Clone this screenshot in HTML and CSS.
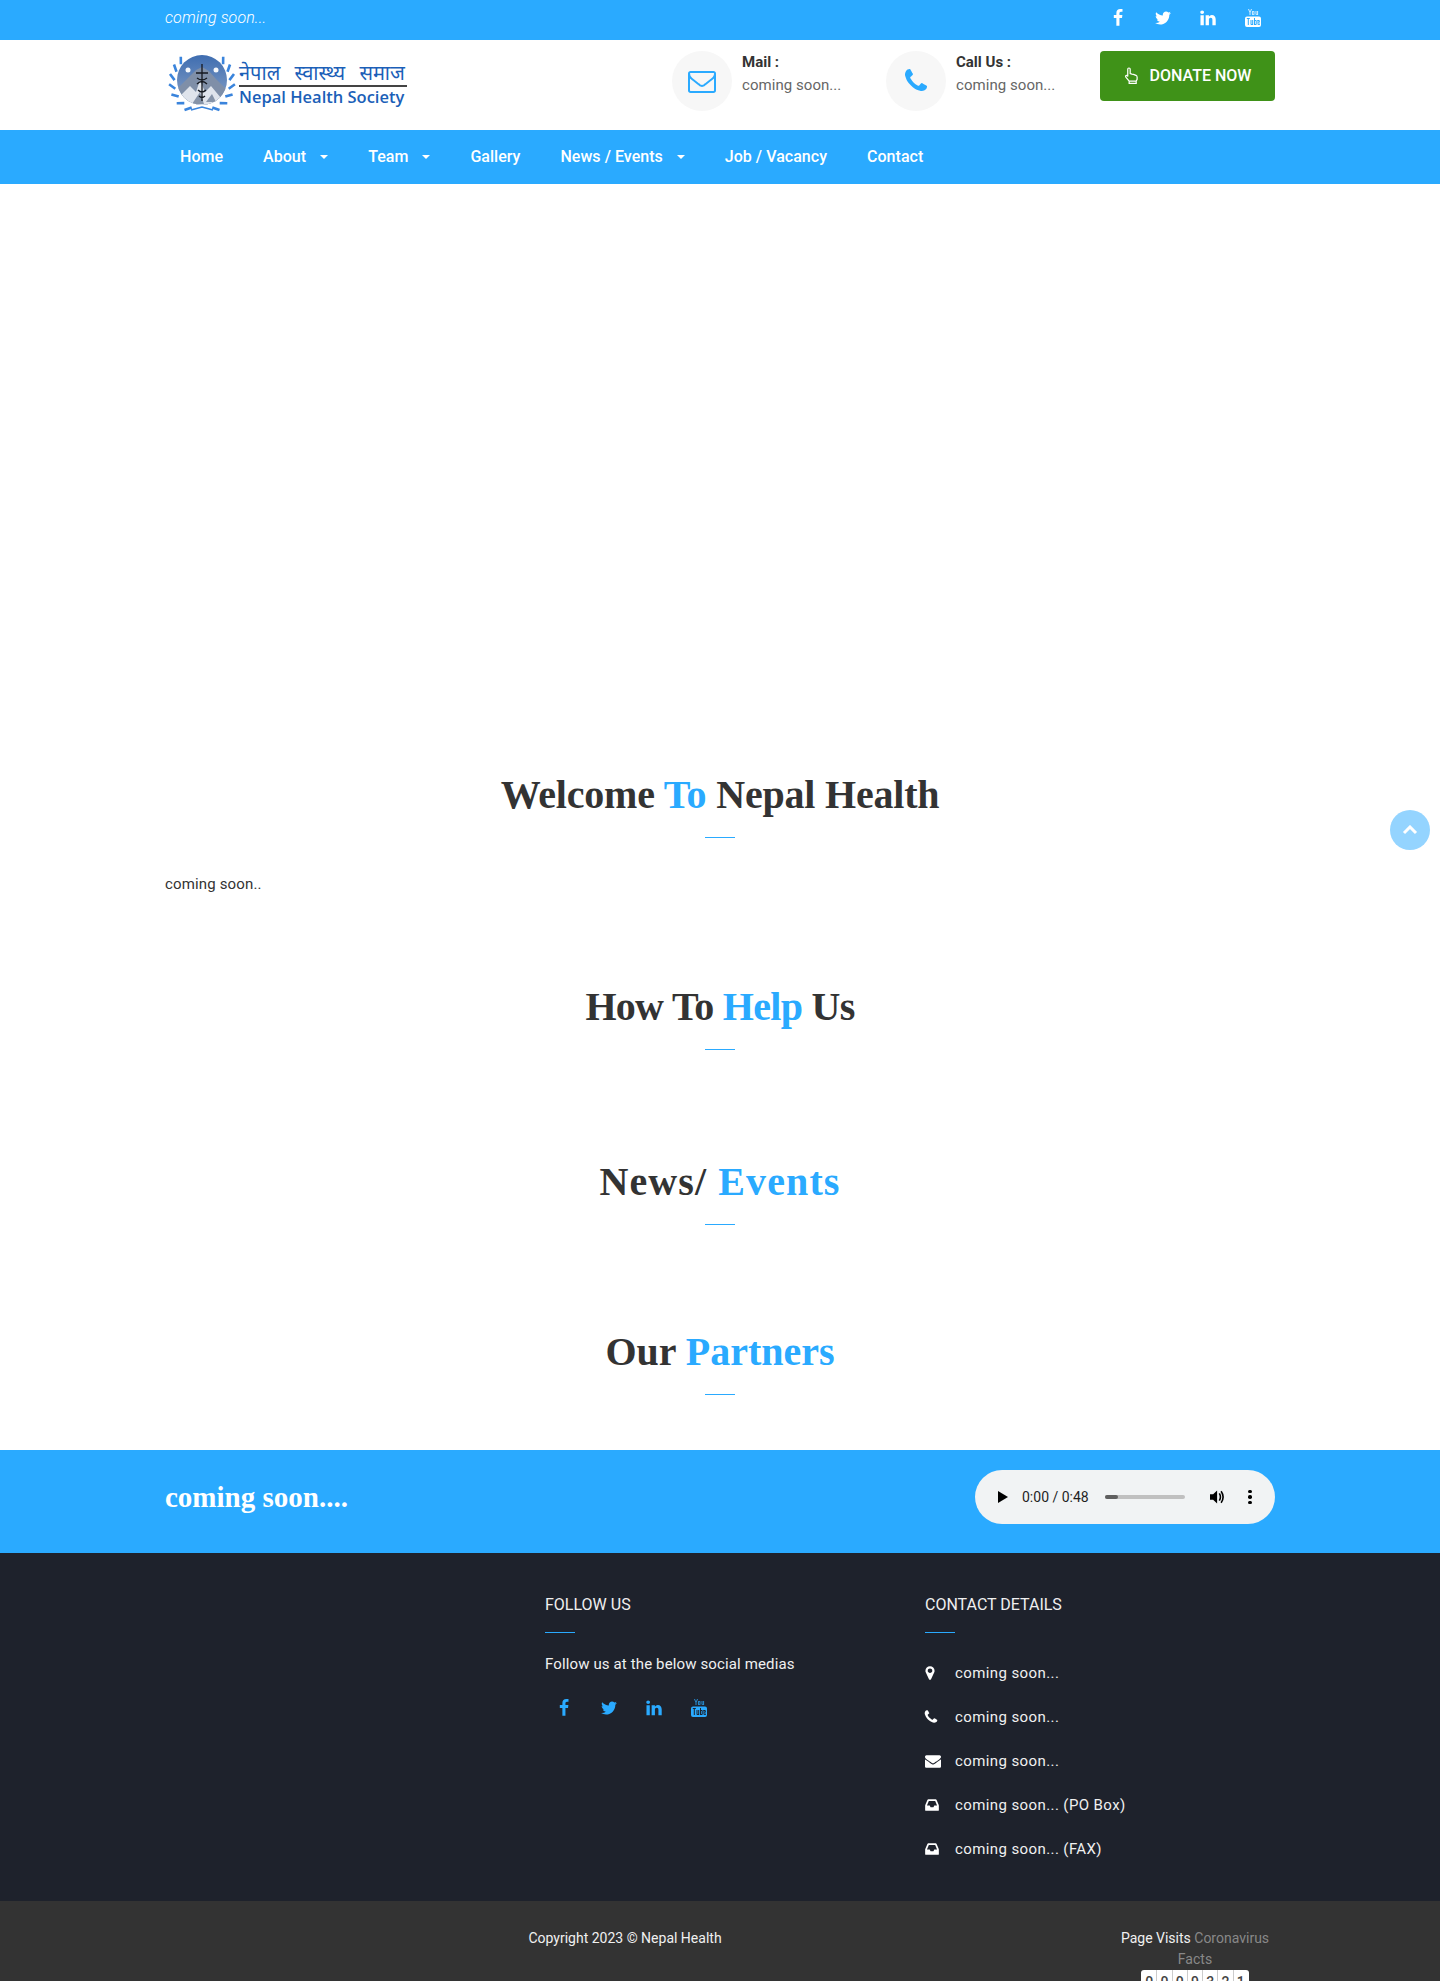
FILE: index.html
```html
<!DOCTYPE html>
<html lang="en">
<head>
    <meta charset="UTF-8">
    <title>Nepal Health Society</title>
    <link rel="stylesheet" href="styles.css">
</head>
<body>
    <svg class="defs" width="0" height="0">
        <symbol id="i-fb" viewBox="0 0 1792 1792"><path d="M1343 12v264h-157q-86 0-116 36t-30 108v189h293l-39 296h-254v759h-306v-759h-255v-296h255v-218q0-186 104-288.5t277-102.5q147 0 228 12z"/></symbol>
        <symbol id="i-tw" viewBox="0 0 1792 1792"><path d="M1684 408q-67 98-162 167 1 14 1 42 0 130-38 259.5t-115.5 248.5-184.5 210.5-258 146-323 54.5q-271 0-496-145 35 4 78 4 225 0 401-138-105-2-188-64.5t-114-159.5q33 5 61 5 43 0 85-11-112-23-185.5-111.5t-73.5-205.5v-4q68 38 146 41-66-44-105-115t-39-154q0-88 44-163 121 149 294.5 238.5t371.5 99.5q-8-38-8-74 0-134 94.5-228.5t228.5-94.5q140 0 236 102 109-21 200-76-35 110-120 164 84-9 168-45z"/></symbol>
        <symbol id="i-in" viewBox="0 0 1792 1792"><path d="M477 625v991h-330v-991h330zm21-306q1 73-50.5 122t-135.5 49h-2q-82 0-132-49t-50-122q0-74 51.5-122.5t134.5-48.5 133 48.5 51 122.5zm1166 729v568h-329v-530q0-105-40.5-164.5t-126.5-59.5q-63 0-105.5 34.5t-63.5 85.5q-11 30-11 81v553h-329q2-399 2-647t-1-296l-1-48h329v144h-2q20-32 41-56t56.5-52 87-43.5 114.5-15.5q171 0 275 113.5t104 332.5z"/></symbol>
        <symbol id="i-yt" viewBox="0 0 16 18">
            <path d="M3 0h1l1 2.500L6 0h1L5.500 3.500V6h-1V3.500zM7.500 2h1.400q.6 0 .6.700v2.600q0 .7-.6.700H7.500q-.6 0-.6-.7V2.700q0-.7.600-.7zm.4.800v2.400h.6V2.800zM10.500 2h1v3.200h.6V2h1v4h-1.400q-1.200 0-1.200-1z" opacity=".8"/>
            <path fill-rule="evenodd" d="M2 7.500h12q2 0 2 2v6.500q0 2-2 2H2q-2 0-2-2V9.500q0-2 2-2zM1.800 9v1h1v6h1v-6h1V9zM5.500 11v4q0 1 1 1h1.700v-5h-1v4h-.7v-4zM9 9v7h1.700q1 0 1-1v-3q0-1-1-1H10V9zm1 3h.7v3H10zM12.500 12v3q0 1 1 1h1.300v-1.500h-.9v.8h-.4v-1.800h1.300V12q0-1-1-1h-.9q-.9 0-.9 1zm1 0h.4v.9h-.4z"/>
        </symbol>
        <symbol id="i-mail-o" viewBox="0 0 1792 1792"><path d="M1664 1504v-768q-32 36-69 66-268 206-426 338-51 43-83 67t-86.500 48.500-102.500 24.500h-2q-48 0-102.500-24.500t-86.500-48.500-83-67q-158-132-426-338-37-30-69-66v768q0 13 9.500 22.500t22.500 9.500h1472q13 0 22.500-9.500t9.500-22.500zm0-1051v-24.500l-.5-13-3-12.500-5.500-9-9-7.500-14-2.500h-1472q-13 0-22.500 9.500t-9.500 22.500q0 168 147 284 193 152 401 317 6 5 35 29.500t46 37.500 44.500 31.500 50.500 27.500 43 9h2q20 0 43-9t50.500-27.500 44.500-31.500 46-37.500 35-29.500q208-165 401-317 54-43 100.500-115.500t46.500-131.500zm128-37v1088q0 66-47 113t-113 47h-1472q-66 0-113-47t-47-113v-1088q0-66 47-113t113-47h1472q66 0 113 47t47 113z"/></symbol>
        <symbol id="i-phone" viewBox="0 0 1792 1792"><path d="M1600 1240q0 27-10 70.500t-21 68.500q-21 50-122 106-94 51-186 51-27 0-53-3.500t-57.500-12.500-47-14.500-55.500-20.500-49-18q-98-35-175-83-127-79-264-216t-216-264q-48-77-83-175-3-9-18-49t-20.500-55.500-14.500-47-12.500-57.500-3.500-53q0-92 51-186 56-101 106-122 25-11 68.500-21t70.500-10q14 0 21 3 18 6 53 76 11 19 30 54t35 63.500 31 53.500q3 4 17.500 25t21.500 35.500 7 28.500q0 20-28.500 50t-62 55-62 53-28.500 46q0 9 5 22.500t8.500 20.500 14 24 11.500 19q76 137 174 235t235 174q2 1 19 11.500t24 14 20.500 8.500 22.500 5q18 0 46-28.500t53-62 55-62 50-28.500q14 0 28.500 7t35.500 21.500 25 17.500q25 15 53.500 31t63.500 35 54 30q70 35 76 53 3 7 3 21z"/></symbol>
        <symbol id="i-pin" viewBox="0 0 1792 1792"><path d="M1152 640q0-106-75-181t-181-75-181 75-75 181 75 181 181 75 181-75 75-181zm256 0q0 109-33 179l-364 774q-16 33-47.500 52t-67.500 19-67.500-19-46.500-52l-365-774q-33-70-33-179 0-212 150-362t362-150 362 150 150 362z"/></symbol>
        <symbol id="i-mail" viewBox="0 0 1792 1792"><path d="M1792 710v794q0 66-47 113t-113 47h-1472q-66 0-113-47t-47-113v-794q44 49 101 87 362 246 497 345 57 42 92.500 65.500t94.500 48 110 24.500h2q51 0 110-24.500t94.500-48 92.500-65.500q170-123 498-345 57-39 100-87zm0-294q0 79-49 151t-122 123q-376 261-468 325-10 7-42.500 30.500t-54 38-52 32.500-57.500 27-50 9h-2q-23 0-50-9t-57.500-27-52-32.500-54-38-42.500-30.500q-91-64-262-182.500t-205-142.500q-62-42-117-115.500t-55-136.500q0-78 41.500-130t118.500-52h1472q65 0 112.500 47t47.500 113z"/></symbol>
        <symbol id="i-inbox" viewBox="0 0 1792 1792"><path d="M1151 960h316q-1-3-2.500-8.500t-2.500-7.500l-212-496h-708l-212 496q-1 3-2.500 8.500t-2.500 7.500h316l95 192h320zm513 30v482q0 26-19 45t-45 19h-1408q-26 0-45-19t-19-45v-482q0-62 25-123l238-552q10-25 36.500-42t52.500-17h832q26 0 52.500 17t36.500 42l238 552q25 61 25 123z"/></symbol>
    </svg>

    <div class="topbar">
        <div class="container topbar-in">
            <em class="top-note">coming soon...</em>
            <div class="top-social">
                <svg class="ic"><use href="#i-fb"/></svg>
                <svg class="ic"><use href="#i-tw"/></svg>
                <svg class="ic"><use href="#i-in"/></svg>
                <svg class="ic"><use href="#i-yt"/></svg>
            </div>
        </div>
    </div>

    <header class="header">
        <div class="container header-in">
            <div class="logo">
                <svg class="emblem" viewBox="0 0 68 60">
                    <defs>
                        <linearGradient id="sky" x1="0" y1="0" x2="0" y2="1">
                            <stop offset="0" stop-color="#3d6cb0"/>
                            <stop offset="1" stop-color="#8fa6c8"/>
                        </linearGradient>
                        <clipPath id="globe"><circle cx="34" cy="26" r="25"/></clipPath>
                        <g id="leaves">
                            <path d="M12.900 10.300L12.800 2.700M8.500 17.700L6 10.500M6.600 26.100L2 20M7.300 34.700L1.100 30.300M10.700 42.600L3.400 40.400M16.300 49.100L8.700 49.200M23.700 53.500L16.500 56"/>
                        </g>
                    </defs>
                    <g clip-path="url(#globe)">
                        <rect x="6" y="0" width="56" height="54" fill="url(#sky)"/>
                        <path d="M4 40L20 24l8-8 6-3 7 4 7 8 16 16v14H4z" fill="#7f8fa8"/>
                        <path d="M12 42l10-10 6 6 4-12 5 12 6-6 10 12-8 8H20z" fill="#dfe4ec"/>
                        <path d="M24 50l8-12 4 12zM38 48l6-8 4 8z" fill="#8593a8"/>
                    </g>
                    <circle cx="20" cy="16" r="2.500" fill="#f4f7fb"/>
                    <circle cx="48" cy="16" r="2.500" fill="#f4f7fb"/>
                    <path d="M34 10v37M28 19h12M29 24q5 4 10 0M29 30q5-5 10 0M30 36q4 4 8 0M31 42q3 3 6 0" stroke="#14181f" stroke-width="1.300" fill="none"/>
                    <g stroke="#3a84dc" stroke-width="2.600" fill="none">
                        <use href="#leaves"/>
                        <use href="#leaves" transform="matrix(-1 0 0 1 68 0)"/>
                        <path d="M23 56l11-3 11 3" stroke-width="1.600"/>
                    </g>
                </svg>
                <div class="logo-text">
                    <div class="logo-np">नेपाल स्वास्थ्य समाज</div>
                    <div class="logo-en">Nepal Health Society</div>
                </div>
            </div>
            <div class="header-right">
                <div class="info">
                    <span class="info-ic"><svg class="ic-mail"><use href="#i-mail-o"/></svg></span>
                    <div class="info-tx"><b>Mail :</b><span>coming soon...</span></div>
                </div>
                <div class="info">
                    <span class="info-ic"><svg class="ic-call"><use href="#i-phone"/></svg></span>
                    <div class="info-tx"><b>Call Us :</b><span>coming soon...</span></div>
                </div>
                <a class="donate" href="#">
                    <svg class="ic-hand" viewBox="0 0 16 18"><path d="M4 10V2.500q0-1.500 1.300-1.500T6.600 2.500V7l1.800.5 1.700.3 2.700 1q1.200.6 1.200 2v2.200L13 15H5.500L2.200 11q-1-1.400 0-2t1.800 1zM5.500 15v2.500H13V15" fill="none" stroke="#fff" stroke-width="1.300"/></svg>
                    DONATE NOW
                </a>
            </div>
        </div>
    </header>

    <nav class="nav">
        <div class="container nav-in">
            <a href="#">Home</a>
            <a href="#" class="caret">About</a>
            <a href="#" class="caret">Team</a>
            <a href="#">Gallery</a>
            <a href="#" class="caret">News / Events</a>
            <a href="#">Job / Vacancy</a>
            <a href="#">Contact</a>
        </div>
    </nav>

    <div class="hero"></div>

    <section class="sec sec-welcome">
        <div class="container">
            <h2 class="title">Welcome <span>To</span> Nepal Health</h2>
            <p class="welcome-tx">coming soon..</p>
        </div>
    </section>
    <section class="sec sec-help">
        <div class="container"><h2 class="title">How To <span>Help</span> Us</h2></div>
    </section>
    <section class="sec sec-news">
        <div class="container"><h2 class="title">News/ <span>Events</span></h2></div>
    </section>
    <section class="sec sec-partners">
        <div class="container"><h2 class="title">Our <span>Partners</span></h2></div>
    </section>

    <div class="band">
        <div class="container band-in">
            <div class="band-tx">coming soon....</div>
            <div class="player">
                <svg class="pl-play" viewBox="0 0 10 12"><path d="M0 0l10 6-10 6z"/></svg>
                <span class="pl-time">0:00 / 0:48</span>
                <div class="pl-track"><i></i></div>
                <svg class="pl-vol" viewBox="0 0 18 16"><path d="M0 5h3.500L8 .8v14.400L3.500 11H0z"/><path d="M10.500 4q2.500 4 0 8M12.500 1.500q4.500 6.500 0 13" fill="none" stroke="#000" stroke-width="1.800"/></svg>
                <div class="pl-more"><i></i><i></i><i></i></div>
            </div>
        </div>
    </div>

    <footer class="footer">
        <div class="container foot-grid">
            <div class="foot-col"></div>
            <div class="foot-col">
                <h4>FOLLOW US</h4>
                <p class="foot-p">Follow us at the below social medias</p>
                <div class="foot-social">
                    <svg class="ic"><use href="#i-fb"/></svg>
                    <svg class="ic"><use href="#i-tw"/></svg>
                    <svg class="ic"><use href="#i-in"/></svg>
                    <svg class="ic"><use href="#i-yt"/></svg>
                </div>
            </div>
            <div class="foot-col">
                <h4>CONTACT DETAILS</h4>
                <ul class="contact">
                    <li><span><svg class="ic-s ic-pin"><use href="#i-pin"/></svg></span>coming soon...</li>
                    <li><span><svg class="ic-s ic-ph"><use href="#i-phone"/></svg></span>coming soon...</li>
                    <li><span><svg class="ic-s"><use href="#i-mail"/></svg></span>coming soon...</li>
                    <li><span><svg class="ic-s ic-box"><use href="#i-inbox"/></svg></span>coming soon... (PO Box)</li>
                    <li><span><svg class="ic-s ic-box"><use href="#i-inbox"/></svg></span>coming soon... (FAX)</li>
                </ul>
            </div>
        </div>
    </footer>

    <div class="copy">
        <div class="container copy-in">
            <div class="copy-l">Copyright 2023 © Nepal Health</div>
            <div class="copy-r">
                Page Visits <a href="#">Coronavirus Facts</a>
                <div class="counter"><i>0</i><i>0</i><i>0</i><i>9</i><i>3</i><i>2</i><i>1</i></div>
            </div>
        </div>
    </div>

    <a class="totop" href="#"><svg viewBox="0 0 16 10"><path d="M2 8l6-6 6 6" fill="none" stroke="#fff" stroke-width="3"/></svg></a>
</body>
</html>
```

FILE: styles.css
```css
*{margin: 0; padding: 0; box-sizing: border-box;}
body{font-family: Roboto, "Noto Sans", sans-serif; font-size: 14px; color: #333; background: #fff; overflow-x: hidden;}
a{color: inherit; text-decoration: none;}
ul{list-style: none;}
.defs{position: absolute;}
.container{width: 1140px; margin: 0 auto; padding: 0 15px;}

.topbar{height: 40px; background: #2aaaff; color: #fff;}
.topbar-in{display: flex; justify-content: space-between; align-items: center; height: 34px;}
.top-note{font-weight: 300; font-size: 16px; letter-spacing: .1px;}
.top-social{display: flex; gap: 27px; padding-right: 13px; margin-top: 2px; fill: #fff;}
.ic{width: 18px; height: 18px; display: block;}

.header{height: 90px;}
.header-in{display: flex; justify-content: space-between;}
.logo{display: flex; align-items: center; height: 90px; padding-left: 3px; padding-bottom: 2px;}
.emblem{width: 68px; height: 60px; margin-right: 3px;}
.logo-text{width: 168px; color: #1b5fb8;}
.logo-np{font-family: "Noto Sans", sans-serif; font-size: 20px; word-spacing: 9px; line-height: 24px; border-bottom: 2px solid #444; white-space: nowrap; height: 26px;}
.logo-en{font-family: "Open Sans", sans-serif; font-weight: 600; font-size: 16.500px; line-height: 20px; white-space: nowrap;}
.header-right{display: flex; padding-top: 11px;}
.info{display: flex; width: 214px;}
.info-ic{width: 60px; height: 60px; border-radius: 50%; background: #f7f7f7; display: flex; align-items: center; justify-content: center; margin-right: 10px; fill: #2aaaff;}
.ic-mail{width: 28px; height: 28px;}
.ic-call{width: 28px; height: 28px;}
.info-tx{display: flex; flex-direction: column; font-size: 15px;}
.info-tx b{color: #333; font-weight: 700; font-size: 15px; line-height: 22px;}
.info-tx span{color: #666; line-height: 24px; font-size: 15px; letter-spacing: .05px;}
.donate{width: 175px; height: 50px; background: #3f9218; color: #fff; border-radius: 4px; font-weight: 500; font-size: 16px; display: flex; align-items: center; justify-content: center; gap: 11px; padding-bottom: 1px;}
.ic-hand{width: 15px; height: 17px;}

.nav{height: 54px; background: #2aaaff; color: #fff;}
.nav-in{display: flex; align-items: center; height: 53px; gap: 40px; padding-left: 30px; font-weight: 500; font-size: 16px; letter-spacing: .03px;}
.caret{display: flex; align-items: center;}
.caret:after{content: ""; margin-left: 14px; border-top: 4px solid #fff; border-left: 4px solid transparent; border-right: 4px solid transparent;}

.hero{height: 572px;}
.title{font-family: "Liberation Serif", serif; font-weight: 700; font-size: 40px; line-height: 44px; text-align: center; color: #333;}
.title span{color: #2aaaff;}
.title:after{content: ""; display: block; width: 30px; height: 1px; background: #2aaaff; margin: 20px auto 0;}
.sec-welcome{padding-top: 17px;}
.sec-welcome .title{letter-spacing: -.2px;}
.welcome-tx{margin-top: 34px; line-height: 24px; font-size: 15px; letter-spacing: .15px;}
.sec-help{padding-top: 89px;}
.sec-help .title{letter-spacing: -.7px;}
.sec-news{padding-top: 110px;}
.sec-news .title{letter-spacing: 1.100px;}
.sec-partners{padding-top: 105px; padding-bottom: 55px;}

.band{height: 103px; background: #2aaaff;}
.band-in{display: flex; justify-content: space-between; align-items: center; height: 94px;}
.band-tx{font-family: "Liberation Serif", serif; font-weight: 700; font-size: 29px; color: #fff;}
.player{width: 300px; height: 54px; border-radius: 27px; background: #f1f3f4; display: flex; align-items: center; padding-left: 23px;}
.pl-play{width: 10px; height: 12px; margin-right: 14px;}
.pl-time{font-size: 14px; color: #1f1f1f; width: 83px;}
.pl-track{width: 80px; height: 4px; border-radius: 2px; background: #c0c0c0;}
.pl-track i{display: block; width: 13px; height: 4px; border-radius: 2px; background: #5f5f5f;}
.pl-vol{width: 16px; height: 16px; margin-left: 25px;}
.pl-more{margin-left: 22px; display: flex; flex-direction: column; gap: 2px;}
.pl-more i{display: block; width: 3.500px; height: 3.500px; border-radius: 50%; background: #000;}

.footer{height: 348px; background: #1e222c; color: #f0f0f0;}
.foot-grid{display: grid; grid-template-columns: 380px 380px 350px; padding-top: 42px;}
.foot-col h4{font-weight: 400; font-size: 16px; line-height: 20px; color: #f0f0f0;}
.foot-col h4:after{content: ""; display: block; width: 30px; height: 1px; background: #2aaaff; margin-top: 17px;}
.foot-p{margin-top: 20px; line-height: 22px; font-size: 15px; letter-spacing: .13px;}
.foot-social{display: flex; gap: 27px; margin-top: 24px; padding-left: 10px; fill: #2aaaff;}
.contact{margin-top: 18px;}
.contact li{display: flex; align-items: center; height: 44px; letter-spacing: .4px; font-size: 15px;}
.contact span{width: 30px; display: block; fill: #fff;}
.ic-s{width: 16px; height: 16px; display: block;}
.ic-pin{margin-left: -3px;}
.ic-ph{margin-left: -2px;}
.ic-box{margin-left: -1px;}

.copy{height: 80px; background: #333; color: #f0f0f0; overflow: hidden;}
.copy-in{display: grid; grid-template-columns: 920px 160px; column-gap: 30px; padding-top: 27px;}
.copy-l{text-align: center; line-height: 21px;}
.copy-r{text-align: center; line-height: 21px;}
.copy-r a{color: #888;}
.counter{display: flex; width: 108px; margin: 0 auto; background: #fff; border-radius: 3px 3px 0 0; padding: 0 1px; height: 24px;}
.counter i{font-style: normal; font-weight: 500; color: #444; flex: 1; border-right: 1px solid #ccc; line-height: 24px; font-size: 14px;}
.counter i:last-child{border-right: 0;}

.totop{position: fixed; top: 810px; right: 10px; width: 40px; height: 40px; border-radius: 50%; background: #2aaaff; opacity: .5; display: flex; align-items: center; justify-content: center;}
.totop svg{width: 16px; height: 10px;}
```
